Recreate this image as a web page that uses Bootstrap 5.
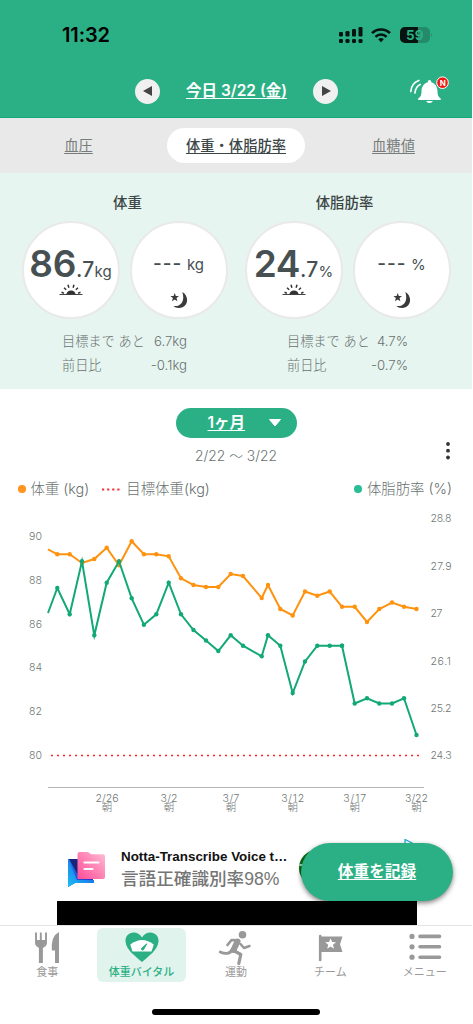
<!DOCTYPE html>
<html lang="ja">
<head>
<meta charset="utf-8">
<meta name="viewport" content="width=device-width, initial-scale=1">
<title>体重・体脂肪率</title>
<link href="https://cdn.jsdelivr.net/npm/bootstrap@5.3.0/dist/css/bootstrap.min.css" rel="stylesheet">
<style>
:root{--brand:#2bb085;--ink:#3c4646;--soft:#69716f}
body{font-family:Inter,"Noto Sans CJK JP",sans-serif;color:var(--ink);background:#fff;overflow:hidden;line-height:1}
.screen{width:472px;height:1024px}
svg{display:block;flex:none}
a{color:inherit}
.ul{text-decoration:underline;text-decoration-thickness:1px;text-underline-offset:2px;white-space:nowrap}
.topbar{height:118px;background:var(--brand);border-bottom:1px solid #12a777}
.status{height:70px;padding:0 40px 0 62px}
.clock{font-size:20px;font-weight:600;color:#000;letter-spacing:-.1px}
.datebar{height:42px}
.datebar .rnd{width:25px;height:25px;background:#f0f0f0}
.today{width:153px;color:#fff;font-size:15.5px;font-weight:600}
.tabs{height:55px;background:#e9e9e9;font-size:14.3px;color:#777d7b}
.tabs .cell{width:157px;height:35px;line-height:35px}
.tabs .pill{width:138px;height:35px;line-height:35px;background:#fff;color:var(--ink);font-weight:500}
.vitals{height:216px;background:#e6f5f0;padding:22px 21.5px 0}
.vcol{width:206px}
.vtitle{font-size:14.4px;font-weight:500;height:26px;line-height:16px}
.dial{width:98px;height:98px;border:2.5px solid #e9e9e9;background:#fff}
.reading{height:39px;margin-top:21px;color:#465052;line-height:39px;white-space:nowrap}
.big{font-size:37px;font-weight:600;letter-spacing:-.4px}
.mid{font-size:21px;font-weight:500;letter-spacing:.3px}
.unit{font-size:15px}
.dash{font-size:19px;font-weight:500;letter-spacing:1px}
.facts{font-size:13.2px;color:var(--soft);font-weight:300;line-height:24px;margin-top:10px}
.period{width:121px;height:30px;background:var(--brand);color:#fff;font-size:15.5px;font-weight:600;margin-top:19px;padding-left:32px;padding-right:15px}
.range{font-size:13.8px;color:var(--soft);font-weight:300;height:38px}
.legend{height:26px;font-size:14.4px;color:var(--soft);font-weight:300;padding:0 20px 0 18px;white-space:nowrap}
.dot{width:7.5px;height:7.5px}
.chart text{font-size:10.5px;fill:#717875;font-weight:300}
.ad{height:86px}
.adrow{height:62px;padding-left:67px}
.adtitle{font:bold 13.4px "Liberation Sans",sans-serif;color:#111;line-height:18px;white-space:nowrap}
.adsub{font-family:"Liberation Sans","Noto Sans CJK JP",sans-serif;font-size:17.6px;color:#757575;font-weight:500;line-height:26px;white-space:nowrap}
.adblack{width:360px;height:24px;margin-left:56.5px;background:#000}
.record{right:19px;top:4px;width:152px;height:58px;background:var(--brand);color:#fff;font-size:15.7px;font-weight:700;box-shadow:0 2px 5px rgba(0,0,0,.5)}
.adpeek{left:299px;top:0}
.bottom{height:59px;border-top:1px solid #e4e4e4;font-size:11px;color:#999}
.bottom .item{width:94.4px;padding-top:2px}
.bottom .box{width:89px;height:54px;border-radius:6px;white-space:nowrap}
.bottom .on{background:#e0f3ec;color:var(--brand);font-weight:500}
.bottom svg{height:39px;width:44px}
.homebar{width:168px;height:6px;background:#000;margin-top:25px}
</style>
</head>
<body>
<div class="screen d-flex flex-column position-relative">
  <header class="topbar">
    <div class="status d-flex align-items-center justify-content-between">
      <span class="clock">11:32</span>
      <svg width="94" height="18" viewBox="338 26 94 18">
        <g fill="#06130e">
          <rect x="339" y="32" width="4" height="4.5" rx="1.2"/><rect x="345.500" y="31" width="4" height="5.500" rx="1.2"/><rect x="352" y="29" width="4" height="7.500" rx="1.200"/><rect x="358.500" y="27" width="4" height="9.500" rx="1.200"/>
          <rect x="339" y="39" width="4" height="4" rx="1.200"/><rect x="345.500" y="39" width="4" height="4" rx="1.200"/><rect x="352" y="39" width="4" height="4" rx="1.200"/><rect x="358.500" y="39" width="4" height="4" rx="1.200"/>
          <path d="M378.200 39.300a4 4 0 0 1 5.600 0L381 42.200z"/>
        </g>
        <g fill="none" stroke="#06130e" stroke-width="2.500"><path d="M372 33.200a12.800 12.800 0 0 1 18 0M375.400 36.900a8 8 0 0 1 11.200 0"/></g>
        <rect x="400" y="27" width="30" height="16" rx="5" fill="#238a6a"/>
        <path d="M405 27h13v16h-13a5 5 0 0 1-5-5v-6a5 5 0 0 1 5-5z" fill="#06130e"/>
        <path d="M431 33q2 2 0 4z" fill="#238a6a"/>
        <text x="406" y="40" font-size="13.500" font-weight="700" fill="#2bb085" textLength="17.500">59</text>
      </svg>
    </div>
    <div class="datebar d-flex align-items-center position-relative" style="padding-left:135px">
      <span class="rnd rounded-circle d-flex align-items-center justify-content-center"><svg width="10" height="10"><path d="M9 0v10L0 5z" fill="#444"/></svg></span>
      <span class="today text-center"><a class="ul" href="#">今日 3/22 (金)</a></span>
      <span class="rnd rounded-circle d-flex align-items-center justify-content-center"><svg width="10" height="10"><path d="M1 0v10l9-5z" fill="#444"/></svg></span>
      <svg class="ms-auto" style="margin-right:22px" width="42" height="32" viewBox="408 75 42 32">
        <path d="M418 100c2.500-1.700 3.300-3.500 3.300-7 0-4.500 2.300-8 6.300-9.200v-.6a1.700 1.700 0 0 1 3.400 0v.6c4 1.200 6.300 4.700 6.300 9.200 0 3.500.8 5.300 3.200 7v1.600h-22.500zM426 102.500h6.600c-.4 1.200-1.600 2-3.300 2s-2.900-.8-3.300-2z" fill="#fff" transform="translate(.2 -1.500)"/>
        <path d="M410.800 91.500c.5-5.500 3.200-9.300 8-11M415 93c.3-4 2-7 5.200-8.600" fill="none" stroke="#fff" stroke-width="1.700" stroke-linecap="round"/>
        <circle cx="442.500" cy="82.700" r="5.800" fill="#f01810" stroke="#fff" stroke-width="1"/>
        <text x="439.700" y="85.700" font-size="8" font-weight="700" fill="#fff">N</text>
      </svg>
    </div>
  </header>

  <nav class="tabs d-flex align-items-center justify-content-between text-center">
    <a class="cell ul" href="#">血圧</a>
    <a class="pill ul rounded-pill" href="#">体重・体脂肪率</a>
    <a class="cell ul" href="#">血糖値</a>
  </nav>

  <section class="vitals d-flex justify-content-between">
    <div class="vcol">
      <div class="vtitle text-center" style="padding-left:6px">体重</div>
      <div class="d-flex justify-content-between">
        <div class="dial rounded-circle d-flex flex-column align-items-center">
          <div class="reading"><span class="big">86</span><span class="mid">.7</span><span class="unit">kg</span></div>
          <svg width="24" height="14" viewBox="0 0 24 14"><use href="#sun"/></svg>
        </div>
        <div class="dial rounded-circle d-flex flex-column align-items-center">
          <div class="reading"><span class="dash">---</span> <span class="unit">kg</span></div>
          <svg width="18" height="17" viewBox="0 0 18 17" style="margin-top:9px"><use href="#moon"/></svg>
        </div>
      </div>
      <div class="facts mx-auto" style="width:125px">
        <div class="d-flex justify-content-between"><span>目標まで あと</span><span>6.7kg</span></div>
        <div class="d-flex justify-content-between"><span>前日比</span><span>-0.1kg</span></div>
      </div>
    </div>
    <div class="vcol">
      <div class="vtitle text-center" style="padding-right:6px">体脂肪率</div>
      <div class="d-flex justify-content-between">
        <div class="dial rounded-circle d-flex flex-column align-items-center">
          <div class="reading"><span class="big">24</span><span class="mid">.7</span><span class="unit pct">%</span></div>
          <svg width="24" height="14" viewBox="0 0 24 14"><use href="#sun"/></svg>
        </div>
        <div class="dial rounded-circle d-flex flex-column align-items-center">
          <div class="reading"><span class="dash">---</span> <span class="unit pct">%</span></div>
          <svg width="18" height="17" viewBox="0 0 18 17" style="margin-top:9px"><use href="#moon"/></svg>
        </div>
      </div>
      <div class="facts mx-auto" style="width:121px">
        <div class="d-flex justify-content-between"><span>目標まで あと</span><span>4.7%</span></div>
        <div class="d-flex justify-content-between"><span>前日比</span><span>-0.7%</span></div>
      </div>
    </div>
  </section>

  <section class="position-relative">
    <div class="period rounded-pill mx-auto d-flex align-items-center justify-content-between">
      <a class="ul" href="#">1ヶ月</a>
      <svg width="14" height="8"><path d="M1.500.5h11L7 7z" fill="#fff" stroke="#fff" stroke-linejoin="round"/></svg>
    </div>
    <div class="range d-flex align-items-center justify-content-center">2/22 ～ 3/22</div>
    <svg class="position-absolute" style="right:22px;top:52px" width="4" height="20"><g fill="#333"><circle cx="2" cy="3" r="1.900"/><circle cx="2" cy="9.700" r="1.900"/><circle cx="2" cy="16.500" r="1.900"/></g></svg>
    <div class="legend d-flex align-items-center">
      <span class="dot rounded-circle" style="background:#ff9421"></span><span class="lg1" style="margin-left:5px">体重 (kg)</span>
      <svg style="margin:0 6px 0 13px" width="18" height="3"><path d="M0 1.500h18" stroke="#e33" stroke-width="2" stroke-dasharray="2.200 2.900"/></svg><span class="lg2">目標体重(kg)</span>
      <span class="dot rounded-circle ms-auto" style="background:#2bbd94"></span><span class="lg3" style="margin-left:5px">体脂肪率 (%)</span>
    </div>
    <svg class="chart" width="472" height="337" viewBox="0 501 472 337">
      <defs>
        <marker id="mo" markerUnits="userSpaceOnUse" markerWidth="6" markerHeight="6" refX="3" refY="3"><circle cx="3" cy="3" r="2.200" fill="#ff920f"/></marker>
        <marker id="mg" markerUnits="userSpaceOnUse" markerWidth="6" markerHeight="6" refX="3" refY="3"><circle cx="3" cy="3" r="2.200" fill="#12a877"/></marker>
      </defs>
      <g id="left-axis">
        <text x="29" y="539" textLength="13">90</text><text x="29" y="583" textLength="13">88</text><text x="29" y="626.500" textLength="13">86</text><text x="29" y="670" textLength="13">84</text><text x="29" y="714" textLength="13">82</text><text x="29" y="758" textLength="13">80</text>
      </g>
      <g id="right-axis">
        <text x="430.500" y="521.300" textLength="21">28.8</text><text x="430.500" y="569" textLength="21">27.9</text><text x="430.500" y="616" textLength="12">27</text><text x="430.500" y="663.500" textLength="20.500">26.1</text><text x="430.500" y="711" textLength="21">25.2</text><text x="430.500" y="758" textLength="21">24.3</text>
      </g>
      <path d="M51 754.500h370" stroke="#f22" stroke-width="1.400" stroke-dasharray="2 4"/>
      <path d="M48 786.500h376" stroke="#b5b5b5" stroke-width="1.200"/>
      <g id="days" text-anchor="middle">
        <text x="107" y="800.500" textLength="23">2/26</text><text x="169" y="800.500" textLength="17">3/2</text><text x="231" y="800.500" textLength="17">3/7</text><text x="292.700" y="800.500" textLength="23">3/12</text><text x="354.700" y="800.500" textLength="23">3/17</text><text x="416.500" y="800.500" textLength="23">3/22</text>
        <g style="font-size:9px"><text class="am" x="107" y="810">朝</text><text class="am" x="169" y="810">朝</text><text class="am" x="231" y="810">朝</text><text class="am" x="292.700" y="810">朝</text><text class="am" x="354.700" y="810">朝</text><text class="am" x="416.500" y="810">朝</text></g>
      </g>
      <polyline fill="none" stroke="#ff920f" stroke-width="2" marker-mid="url(#mo)" marker-end="url(#mo)" points="48,548.300 57.300,553.300 69.700,553.300 82,562 94.300,558 106.700,546.700 119,564.300 131.700,540.200 143.900,553.300 156.300,553.300 168.700,555.300 181,577.300 193.500,584 206,586 218.300,586 230.700,573 243,575 261.700,597 268,584 280.300,608 292.700,614.500 305,590.500 317.300,594.700 329.700,590.500 342,605.800 354.700,605.800 367,621 379.300,608 392,601.500 404,605.800 416.500,608"/>
      <polyline fill="none" stroke="#12a877" stroke-width="2" stroke-miterlimit="10" marker-mid="url(#mg)" marker-end="url(#mg)" points="48,612 57.300,587 69.700,613.300 82,560.300 94.300,634.300 106.700,581.700 119,560.300 131.700,597.300 143.900,623.700 156.300,613.300 168.700,581.700 181,613.300 193.500,629 206,639.500 218.300,650 230.700,634.300 243,644.700 261.700,655.300 268,634.300 280.300,644.700 292.700,692 305,660.500 317.300,644.700 342,644.700 329.700,644.700 342,644.700 354.700,702.500 367,697.300 379.300,702.500 392,702.500 404,697.300 416.500,734"/>
    </svg>
  </section>

  <section class="ad position-relative">
    <div class="adrow d-flex align-items-center">
      <svg width="38" height="38" viewBox="67 849 38 38">
        <defs>
          <linearGradient id="nb" x1="0" y1="0" x2="1" y2="1"><stop offset="0" stop-color="#1585f2"/><stop offset="1" stop-color="#2c22c9"/></linearGradient>
          <linearGradient id="nc" x1="0" y1="1" x2="1" y2="0"><stop offset="0" stop-color="#18c0f5"/><stop offset="1" stop-color="#1f49e0"/></linearGradient>
          <linearGradient id="np" x1="0" y1="1" x2="1" y2="0"><stop offset="0" stop-color="#ff4c98"/><stop offset=".6" stop-color="#ff8dbb"/><stop offset="1" stop-color="#ffc0d8"/></linearGradient>
        </defs>
        <path d="M68 857h25v24H75l-7 4z" fill="url(#nb)"/><path d="M68 857l9 21h17v3H75l-7 4z" fill="url(#nc)"/><path d="M69 857h10v18z" fill="#1a237c"/>
        <path d="M77.500 852a2 2 0 0 1 2-2h8.500l3 2.300h12a2 2 0 0 1 2 2V875a2 2 0 0 1-2 2H77.500z" fill="url(#np)"/>
        <path d="M84.500 860.500h14M84.500 867h8" stroke="#fff" stroke-width="2.200" stroke-linecap="round"/>
      </svg>
      <div style="margin-left:16px"><div class="adtitle">Notta-Transcribe Voice t…</div><div class="adsub">言語正確識別率98%</div></div>
    </div>
    <div class="adblack"></div>
    <svg class="adpeek position-absolute" width="120" height="60" viewBox="299 838 120 60"><circle cx="317" cy="867" r="18" fill="#0b6b12"/><path d="M299.500 864h6" stroke="#dfe" stroke-width="1.500"/><path d="M405 838.500v8l12-2z" fill="#fff" stroke="#22a7d8" stroke-width="1.300"/></svg>
    <a class="record position-absolute rounded-pill d-flex align-items-center justify-content-center ul" href="#">体重を記録</a>
  </section>

  <nav class="bottom d-flex bg-white position-relative">
    <div class="item d-flex justify-content-center"><div class="box d-flex flex-column align-items-center"><svg viewBox="25 927 44 39"><path d="M36 931.500v10.500q0 3 5 4.500q5-1.500 5-4.500v-10.500M40.800 931.500v13" fill="none" stroke="#999" stroke-width="1.900"/><path d="M36 939h9.800v3l-2.800 3.500h-4l-3-3.500z" fill="#999"/><path d="M40.900 944v18" stroke="#999" stroke-width="4"/><path d="M59 931v31h-4v-12.500h-3.200q-1-14.500 7.200-18.500z" fill="#999"/></svg><span>食事</span></div></div>
    <div class="item d-flex justify-content-center"><div class="box on d-flex flex-column align-items-center"><svg viewBox="120 927 44 39"><path d="M142 961c-6-5.500-16-12-16.500-20.500-.3-5.500 3.500-9 8-9 3.500 0 6.500 1.500 8.500 5 2-3.500 5-5 8.500-5 4.500 0 8.300 3.500 8 9-.5 8.500-10.500 15-16.500 20.500z" fill="#2bb085"/><path d="M130.300 943.500q11.700-9 23.400 0l-2.200 7h-19z" fill="#fff"/><path d="M146.800 942.800l-3.300 5.900c-.8 1-2.500 0-2-1.300z" fill="#2bb085" stroke="#2bb085"/></svg><span>体重バイタル</span></div></div>
    <div class="item d-flex justify-content-center"><div class="box d-flex flex-column align-items-center"><svg viewBox="214 927 44 39"><circle cx="242.500" cy="933.800" r="3.800" fill="#999"/><g fill="none" stroke="#999" stroke-linecap="round" stroke-linejoin="round"><path d="M227.500 944l4-5 6 .3" stroke-width="2.700"/><path d="M237.500 940.500l-4 8.500" stroke-width="6"/><path d="M240.500 943l3.500 4 5.500-2" stroke-width="2.500"/><path d="M232.300 948.500c-2 4-6.500 5-12 2.500" stroke-width="3"/><path d="M234.500 950l6.300 3.500-2 9" stroke-width="3.200"/></g></svg><span>運動</span></div></div>
    <div class="item d-flex justify-content-center"><div class="box d-flex flex-column align-items-center"><svg viewBox="308 927 44 39"><path d="M320.200 935v24" stroke="#999" stroke-width="2.600" stroke-linecap="round"/><path d="M320 935.500h22.500l-2.500 7.700 2.500 7.800H320z" fill="#999"/><path d="M330.600 937.200l1.500 3.700 3.900.3-3 2.600.9 3.900-3.300-2.100-3.400 2.100 1-3.900-3-2.600 3.900-.3z" fill="#fff"/></svg><span>チーム</span></div></div>
    <div class="item d-flex justify-content-center"><div class="box d-flex flex-column align-items-center"><svg viewBox="403 927 44 39"><g fill="#999"><circle cx="412" cy="935.400" r="2.600"/><circle cx="412" cy="945.800" r="2.600"/><circle cx="412" cy="956.200" r="2.600"/></g><path d="M420 935.400h19.500M420 945.800h19.500M420 956.200h19.500" stroke="#999" stroke-width="3.600" stroke-linecap="round"/></svg><span>メニュー</span></div></div>
  </nav>
  <div class="homebar rounded-pill mx-auto"></div>
  <svg width="0" height="0" class="position-absolute">
    <defs>
      <g id="sun"><path d="M.5 11.500h23" stroke="#444" stroke-width="1"/><path d="M7.300 11.300a4.800 4.800 0 0 1 9.400 0z" fill="#333"/><path d="M2.500 9.300l2.400.9M5 4.800l2.200 2M9 1.800l.9 3M15 1.800l-.9 3M19 4.800l-2.200 2M21.500 9.300l-2.400.9" stroke="#333" stroke-width="1.500"/></g>
      <g id="moon"><path d="M12.300 0c7.500 4 6 16-3.300 16-2.500 0-4.500-.8-5.500-2 8.500 1.200 11.500-6.500 8.800-14z" fill="#3a3a3a"/><path d="M4.700 1l1.100 3 3.200.1-2.500 2 .9 3.200-2.700-1.800-2.700 1.800.9-3.200L.4 4.100 3.600 4z" fill="#3a3a3a"/></g>
    </defs>
  </svg>
</div>
<script src="https://cdn.jsdelivr.net/npm/bootstrap@5.3.0/dist/js/bootstrap.bundle.min.js"></script>
</body>
</html>
